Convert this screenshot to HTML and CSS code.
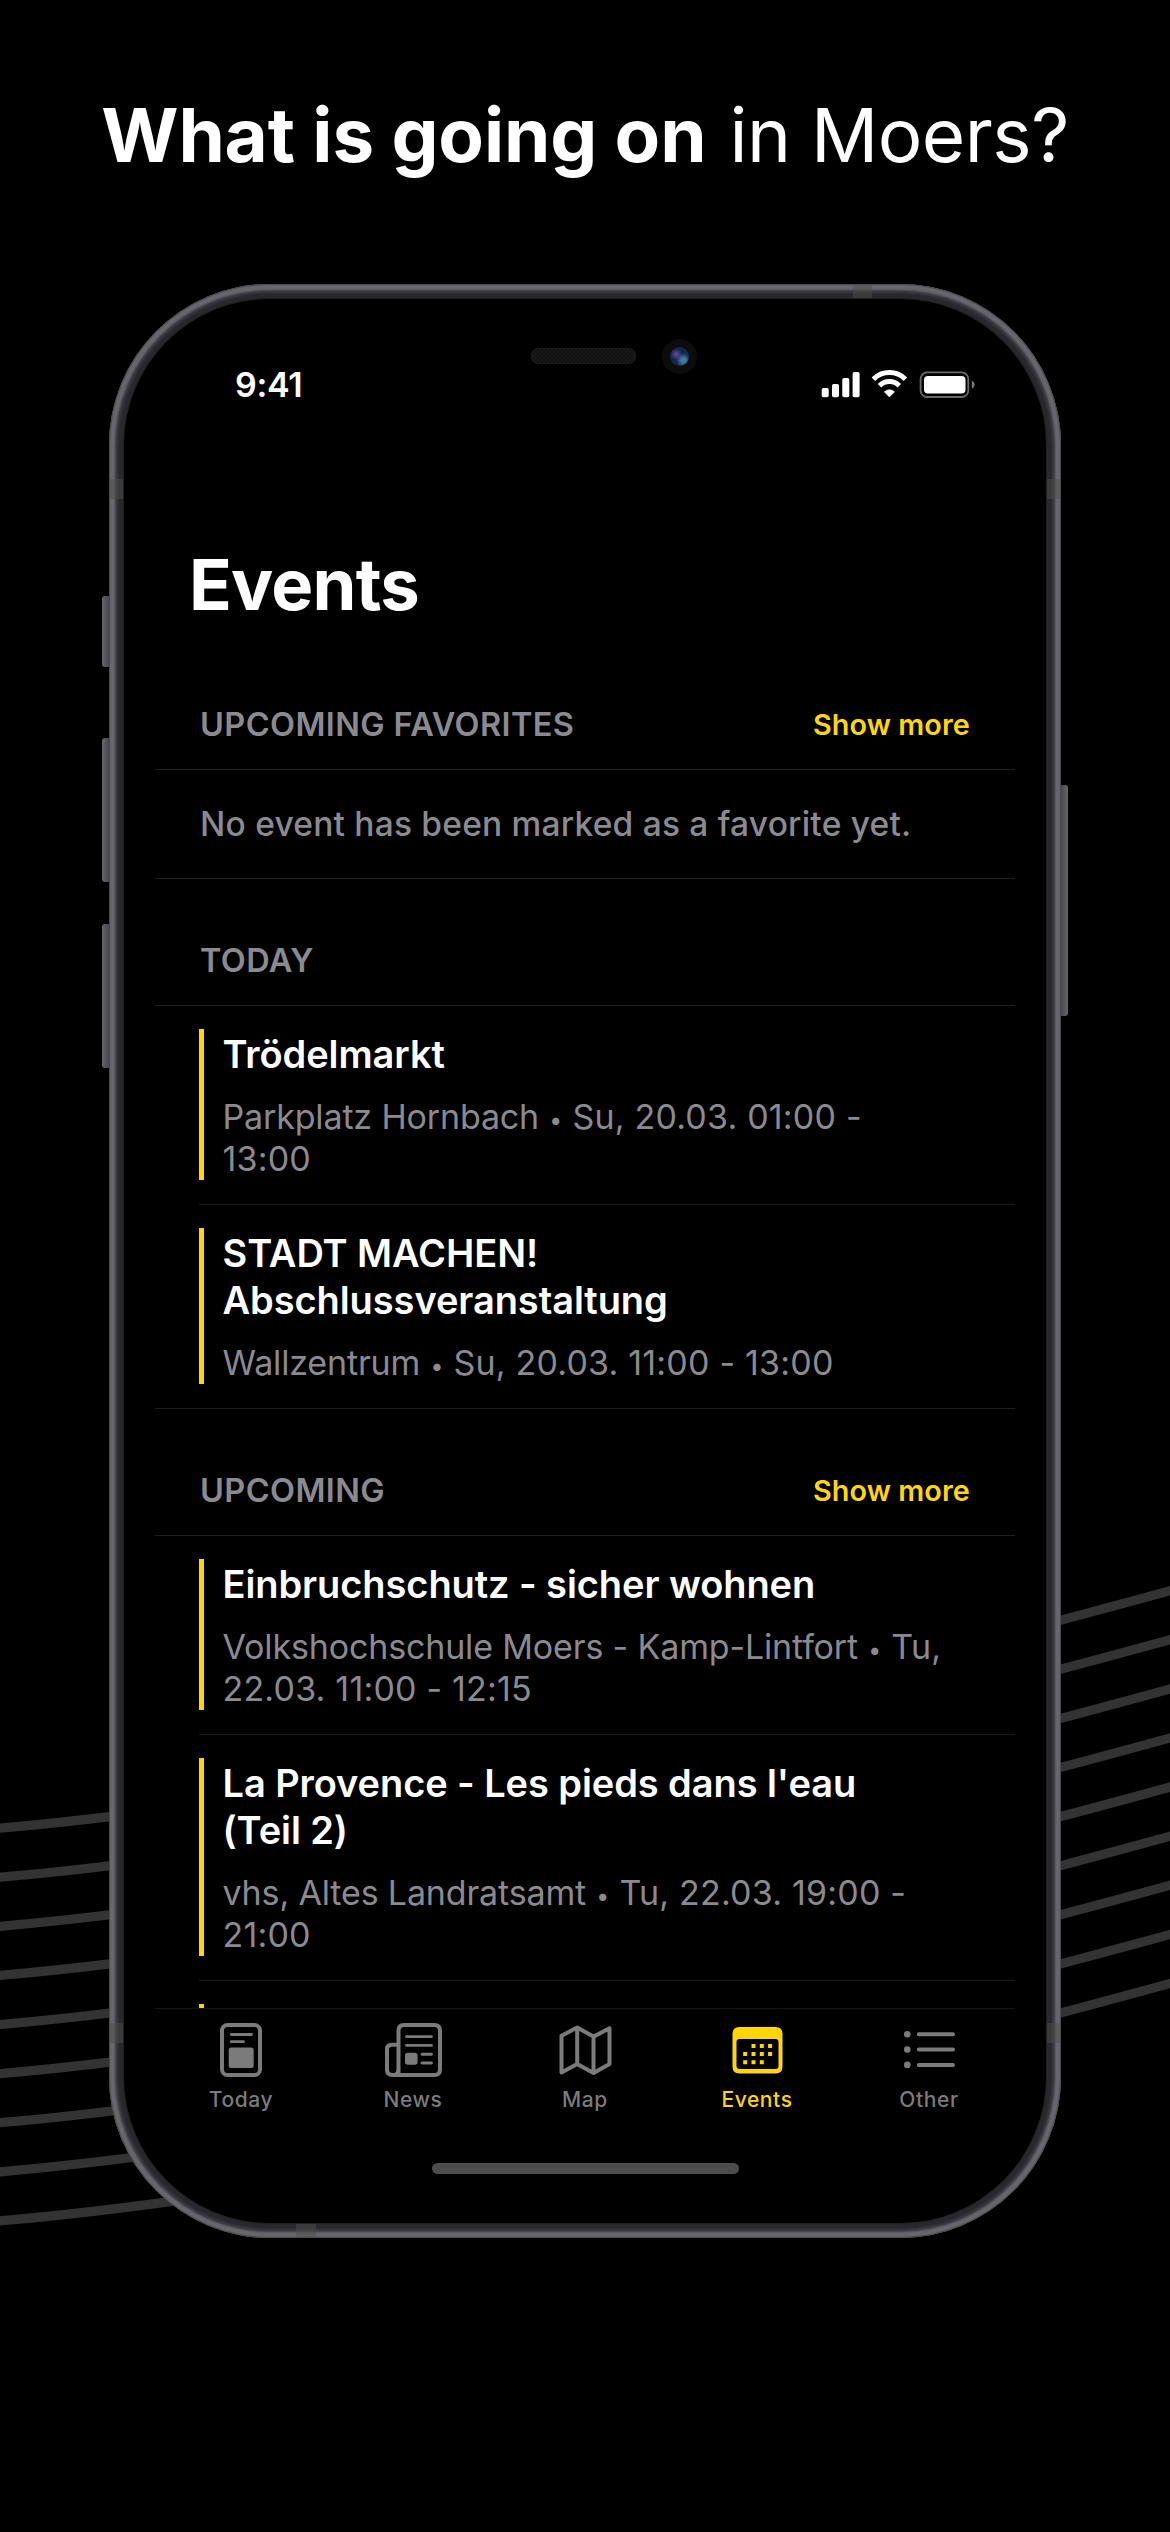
FILE: index.html
```html
<!DOCTYPE html>
<html lang="en">
<head>
<meta charset="utf-8">
<title>What is going on in Moers?</title>
<link rel="stylesheet" href="styles.css">
</head>
<body>
<svg class="waves" viewBox="0 0 1170 2532" aria-hidden="true">
  <defs><path id="wave" d="M-10 1829Q441 1791 1180 1588"/></defs>
  <use href="#wave"/>
  <use href="#wave" y="49.1"/>
  <use href="#wave" y="98.2"/>
  <use href="#wave" y="147.3"/>
  <use href="#wave" y="196.4"/>
  <use href="#wave" y="245.5"/>
  <use href="#wave" y="294.6"/>
  <use href="#wave" y="343.7"/>
  <use href="#wave" y="392.8"/>
</svg>

<h1 class="headline"><strong>What is going on</strong> <span>in Moers?</span></h1>

<main class="phone">
  <i class="key key-mute"></i>
  <i class="key key-up"></i>
  <i class="key key-down"></i>
  <i class="key key-power"></i>
  <i class="band band-left"></i>
  <i class="band band-right"></i>
  <i class="band band-left band-low"></i>
  <i class="band band-right band-low"></i>
  <i class="band band-top"></i>
  <i class="band band-bottom"></i>
  <i class="speaker"></i>
  <i class="camera"></i>

  <div class="status">
    <span class="time">9:41</span>
    <svg class="status-icons" viewBox="0 0 156 30" width="156" height="30" aria-hidden="true">
      <g fill="#fff">
        <rect x="1.7" y="18" width="7" height="9.2" rx="1.8"/>
        <rect x="12" y="14" width="7" height="13.2" rx="1.8"/>
        <rect x="22.3" y="8" width="7" height="19.2" rx="1.8"/>
        <rect x="32.6" y="2" width="7" height="25.2" rx="1.8"/>
        <path d="M69.400 27L64.300 21.800Q69.400 17.600 74.500 21.800Z" stroke="#fff" stroke-width=".6" stroke-linejoin="round"/>
      </g>
      <path d="M53.400 9.300A22.500 22.500 0 0 1 85.400 9.300M59.500 15.700A14 14 0 0 1 79.300 15.700" fill="none" stroke="#fff" stroke-width="5"/>
      <rect x="100.600" y="2.400" width="47.700" height="24.600" rx="6.500" fill="none" stroke="#6a6a6a" stroke-width="1.800"/>
      <rect x="104" y="6" width="41.500" height="17.600" rx="4" fill="#fff"/>
      <path d="M151.800 10.600Q154.700 11.800 154.700 14.700T151.800 18.800Z" fill="#777"/>
    </svg>
  </div>

  <div class="content">
    <h2 class="title">Events</h2>

    <section>
      <header class="head"><h3>Upcoming Favorites</h3><a>Show more</a></header>
      <p class="empty">No event has been marked as a favorite yet.</p>
    </section>

    <section>
      <header class="head"><h3>Today</h3></header>
      <article class="event"><div class="card">
        <h4>Trödelmarkt</h4>
        <p>Parkplatz Hornbach <b>•</b> <time>Su, 20.03. 01:00 -<br>13:00</time></p>
      </div></article>
      <article class="event"><div class="card">
        <h4>STADT MACHEN!<br>Abschlussveranstaltung</h4>
        <p>Wallzentrum <b>•</b> <time>Su, 20.03. 11:00 - 13:00</time></p>
      </div></article>
    </section>

    <section>
      <header class="head"><h3>Upcoming</h3><a>Show more</a></header>
      <article class="event"><div class="card">
        <h4>Einbruchschutz - sicher wohnen</h4>
        <p>Volkshochschule Moers - Kamp-Lintfort <b>•</b> <time>Tu,<br>22.03. 11:00 - 12:15</time></p>
      </div></article>
      <article class="event"><div class="card">
        <h4>La Provence - Les pieds dans l'eau<br>(Teil 2)</h4>
        <p>vhs, Altes Landratsamt <b>•</b> <time>Tu, 22.03. 19:00 -<br>21:00</time></p>
      </div></article>
      <article class="event"><div class="card card-next"></div></article>
    </section>
  </div>

  <nav class="tabs">
    <a class="tab">
      <svg viewBox="0 0 42 54" width="42" height="54" fill="none" stroke="currentColor">
        <rect x="2" y="2" width="38" height="50" rx="5.500" stroke-width="4"/>
        <path d="M11.300 11.500H31.500M11.300 18.700H23.500" stroke-width="2.800" stroke-linecap="round"/>
        <rect x="8.700" y="24.500" width="25" height="20.600" rx="2.500" fill="currentColor" stroke="none"/>
      </svg>
      <span>Today</span>
    </a>
    <a class="tab">
      <svg viewBox="0 0 57 54" width="57" height="54" fill="none" stroke="currentColor">
        <path d="M13.500 52V7.500Q13.500 2 19 2H49.500Q55 2 55 7.500V46.500Q55 52 49.500 52H7.500Q2 52 2 46.500V26.500Q2 21.800 6.700 21.800H13.500V46.500Q13.500 50 10 52" stroke-width="4"/>
        <path d="M21.500 13.600H46.500M21.500 22.400H46.500M37 31.200H46.500M37 40H46.500" stroke-width="2.900" stroke-linecap="round"/>
        <rect x="20" y="29.800" width="12.600" height="12" rx="2.800" fill="currentColor" stroke="none"/>
      </svg>
      <span>News</span>
    </a>
    <a class="tab">
      <svg viewBox="0 0 53 54" width="53" height="54" fill="none" stroke="currentColor" stroke-width="4" stroke-linejoin="round">
        <path d="M2.500 12.800L18.200 4.500L34.500 13.600L50.500 5.300V41L34.500 50L18.200 41L2.500 49.500ZM18.200 4.500V41M34.500 13.600V50"/>
      </svg>
      <span>Map</span>
    </a>
    <a class="tab tab-active">
      <svg viewBox="0 0 51 54" width="51" height="54" fill="currentColor">
        <path fill-rule="evenodd" d="M7.500 4H43.500Q50.500 4 50.500 11V43.500Q50.500 50.500 43.500 50.500H7.500Q.500 50.500 .500 43.500V11Q.500 4 7.500 4ZM7.500 16Q4.500 16 4.500 19V43Q4.500 46 7.500 46H43.500Q46.500 46 46.500 43V19Q46.500 16 43.500 16Z"/>
        <path d="M19.500 21h4v4h-4zM27.800 21h4v4h-4zM36.100 21h4v4h-4zM11.200 29.100h4v4h-4zM19.500 29.100h4v4h-4zM27.800 29.100h4v4h-4zM36.100 29.100h4v4h-4zM11.200 37.200h4v4h-4zM19.500 37.200h4v4h-4zM27.800 37.200h4v4h-4z"/>
      </svg>
      <span>Events</span>
    </a>
    <a class="tab">
      <svg viewBox="0 0 51 54" width="51" height="54" fill="currentColor" stroke="currentColor" stroke-linecap="round">
        <g stroke="none"><circle cx="3.300" cy="11.300" r="3.300"/><circle cx="3.300" cy="26.600" r="3.300"/><circle cx="3.300" cy="41.900" r="3.300"/></g>
        <path d="M14.800 11.300H49M14.800 26.600H49M14.800 41.900H49" stroke-width="4"/>
      </svg>
      <span>Other</span>
    </a>
  </nav>
  <div class="home"></div>
</main>
</body>
</html>
```
FILE: styles.css
```css
* { box-sizing: border-box; margin: 0; padding: 0; }

body {
  position: relative;
  width: 1170px;
  height: 2532px;
  overflow: hidden;
  background: #000;
  color: #fff;
  font-family: Inter, "Liberation Sans", sans-serif;
}

.waves {
  position: absolute;
  inset: 0;
  width: 1170px;
  height: 2532px;
  fill: none;
  stroke: #333;
  stroke-width: 9.2;
}

.headline {
  display: flex;
  justify-content: center;
  gap: 23px;
  height: 284px;
  padding-top: 90px;
  font-size: 74.5px;
  font-weight: 400;
  line-height: 90px;
  white-space: nowrap;
}
.headline strong { font-weight: 700; letter-spacing: -.15px; }
.headline span { letter-spacing: -.5px; }

/* device */
.phone {
  position: relative;
  display: flex;
  flex-direction: column;
  width: 952px;
  height: 1954px;
  margin-left: 109px;
  padding: 80px 46px 0;
  border-radius: 161px;
  background: #000;
  box-shadow:
    inset 0 0 1px 1px #48484b,
    inset 0 0 2px 6px #68676d,
    inset 0 0 2px 9px #3a393f,
    inset 0 0 1px 14px #29282f,
    inset 0 0 0 15px #20201e;
}
.key {
  position: absolute;
  left: -7px;
  width: 7px;
  border-radius: 3px 0 0 3px;
  background: linear-gradient(90deg, #66656b, #48474e);
}
.key-mute { top: 312px; height: 71px; }
.key-up { top: 454px; height: 144px; }
.key-down { top: 640px; height: 144px; }
.key-power {
  top: 501px;
  right: -7px;
  left: auto;
  height: 231px;
  border-radius: 0 3px 3px 0;
  background: linear-gradient(270deg, #66656b, #48474e);
}
.band { position: absolute; width: 14px; height: 20px; background: rgba(78, 78, 76, .5); }
.band-left { top: 195px; left: 0; }
.band-right { top: 195px; right: 0; }
.band-low { top: 1739px; }
.band-top { top: 0; left: 744px; width: 19px; height: 14px; }
.band-bottom { bottom: 0; left: 187px; width: 20px; height: 14px; }
.speaker {
  position: absolute;
  top: 64px;
  left: 422px;
  width: 105px;
  height: 16px;
  border: 1px solid #191919;
  border-width: 1px 2px;
  border-radius: 7px;
  background: repeating-conic-gradient(#1b1b1b 0 25%, #101010 0 50%) 0 0 / 4px 4px;
}
.camera {
  position: absolute;
  top: 55px;
  left: 553px;
  width: 35px;
  height: 35px;
  border: 8px solid #0c0c0c;
  border-radius: 50%;
  background:
    radial-gradient(circle at 33% 39%, #5b3f94 0 8%, transparent 32%),
    radial-gradient(circle at 70% 70%, #3a7ba5 0 12%, transparent 38%),
    #14264a;
}

.status {
  display: flex;
  justify-content: space-between;
  height: 179px;
  padding: 1px 39px 0 80px;
  line-height: 40px;
}
.time { font-size: 34px; font-weight: 600; letter-spacing: -.3px; }
.status-icons { margin-top: 5px; }

/* events list */
.content { height: 1465px; overflow: hidden; }
.title {
  height: 100px;
  padding-left: 34px;
  font-size: 70.6px;
  font-weight: 700;
  line-height: 84px;
  letter-spacing: -.8px;
}
.head {
  display: flex;
  justify-content: space-between;
  height: 127px;
  padding: 62px 45px 0;
  border-bottom: 1px solid #202022;
  line-height: 40px;
}
.head h3 {
  color: #8b8a90;
  font-size: 32.5px;
  font-weight: 600;
  text-transform: uppercase;
  letter-spacing: .4px;
}
.head a { color: #ffd60a; font-size: 28.8px; font-weight: 600; letter-spacing: .1px; }
.empty {
  height: 109px;
  padding: 34px 45px 0;
  border-bottom: 1px solid #202022;
  color: #8b8a90;
  font-size: 33.5px;
  font-weight: 500;
  line-height: 40px;
  letter-spacing: .22px;
  white-space: nowrap;
}
.event { padding: 23px 0 0 44px; }
.event:last-child { padding-left: 0; }
.event:last-child .card { margin-left: 44px; }
.event::after { content: ""; display: block; height: 1px; margin-top: 24px; background: #1c1c1e; }
.card { padding: 1.5px 0 0 18.5px; border-left: 5px solid #ffd60a; white-space: nowrap; }
.card h4 { font-size: 38px; font-weight: 600; line-height: 47px; letter-spacing: -.08px; }
.card p {
  margin-top: 18.5px;
  color: #8b8a90;
  font-size: 34px;
  line-height: 42px;
  letter-spacing: -.15px;
}
.card time { letter-spacing: .2px; }
.card b {
  display: inline-block;
  width: 14.5px;
  font-size: 23px;
  font-weight: 400;
  line-height: 0;
  text-align: center;
  vertical-align: 1.5px;
}
.card-next { height: 150px; }

/* tab bar */
.tabs {
  display: grid;
  grid-template-columns: repeat(5, 1fr);
  height: 153px;
  border-top: 1px solid #161616;
  background: #000;
}
.tab {
  display: flex;
  flex-direction: column;
  align-items: center;
  gap: 10px;
  padding-top: 14px;
  color: #7b7b7b;
  font-size: 21px;
  font-weight: 500;
  line-height: 26px;
  letter-spacing: .6px;
}
.tab svg { flex: none; display: block; }
.tab-active { color: #ffd60a; }
.home {
  width: 307px;
  height: 11px;
  margin: 2px auto 0;
  border-radius: 6px;
  background: #4d4d4d;
}
```
